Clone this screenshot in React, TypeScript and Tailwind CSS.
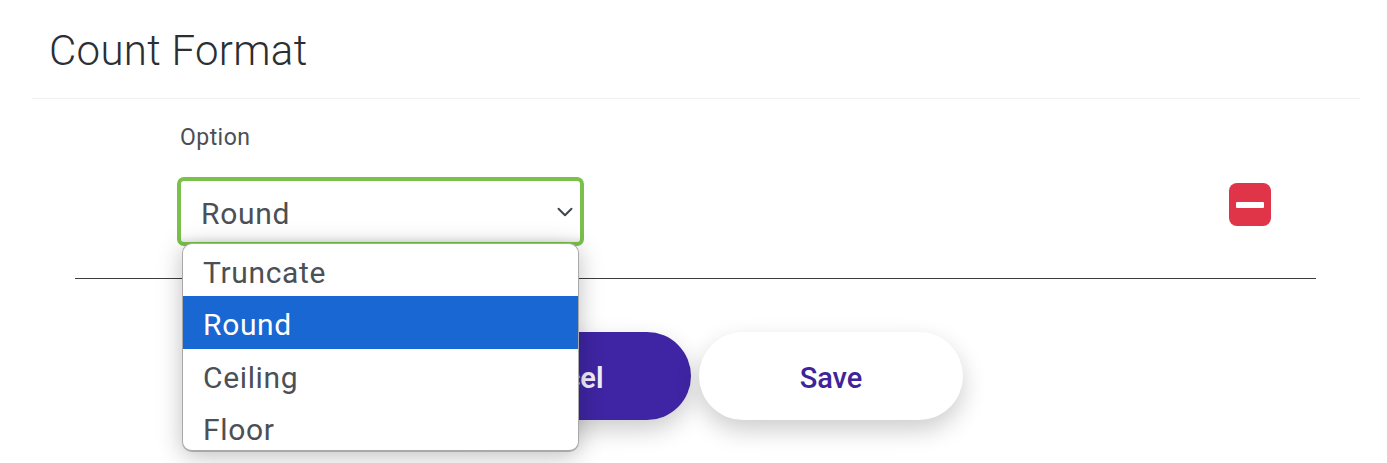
import React from 'react';
import { ChevronDown } from 'lucide-react';

const options = ['Truncate', 'Round', 'Ceiling', 'Floor'];

export default function App() {
  return (
    <div className="h-[463px] w-[1387px] overflow-hidden bg-white font-['Roboto',sans-serif] text-[#3a3f44]">
      <div className="ml-8 mr-[27px] h-[99px] border-b border-[#f1f1f1] pl-[17px] pt-[26px]">
        <h1 className="text-[42px] font-light leading-[50px] tracking-[0.3px] text-[#2b2f33]">Count Format</h1>
      </div>

      <div className="ml-[75px] mr-[71px] h-[180px] border-b border-[#3d3d3d]">
        <div className="flex">
          <div className="ml-[102px] w-[407px]">
            <div className="pl-[3px] pt-[26px] text-[23px] leading-[26px] tracking-[0.45px] text-[#4a4f54]">Option</div>

            <div className="relative mt-[26px] h-[69px]">
              <div className="flex h-[69px] items-center justify-between rounded-[7px] border-4 border-[#7ac04a] pl-5 pr-[2px] shadow-[inset_0_-8px_8px_-8px_rgba(0,0,0,0.15)]">
                <span className="pt-[4px] text-[30px] tracking-[0.7px] text-[#4b5056]">Round</span>
                <ChevronDown size={26} strokeWidth={1.8} className="text-[#3f444a]" />
              </div>

              <div className="absolute left-[5px] top-[66px] z-10 h-[209px] w-[397px] overflow-hidden rounded-[10px] border border-b-2 border-[#a9a9a9] bg-white shadow-[0_4px_24px_rgba(0,0,0,0.25)]">
                {options.map((o) => (
                  <div
                    key={o}
                    className={
                      o === 'Round'
                        ? 'flex h-[53px] items-center bg-[#1967d2] pl-5 pt-[4px] text-[30px] tracking-[0.65px] text-white'
                        : 'flex h-[52px] items-center pl-5 pt-[4px] text-[30px] tracking-[0.65px] text-[#4b5056]'
                    }
                  >
                    {o}
                  </div>
                ))}
              </div>
            </div>
          </div>

          <div className="ml-[645px] mt-[84px]">
            <button className="flex h-[43px] w-[42px] items-center justify-center rounded-[8px] bg-[#e03448]">
              <span className="h-[6px] w-7 rounded-[1px] bg-white" />
            </button>
          </div>
        </div>
      </div>

      <div className="ml-[427px] mt-[53px] flex gap-2">
        <button className="h-[88px] w-[264px] rounded-full bg-[#3f25a3] pt-[6px] text-[29px] font-semibold text-[#f1eefa] shadow-[0_10px_24px_rgba(0,0,0,0.2)]">
          Cancel
        </button>
        <button className="h-[88px] w-[264px] rounded-full bg-white pt-[6px] text-[29px] font-medium text-[#3f2399] shadow-[0_10px_24px_rgba(0,0,0,0.2)]">
          Save
        </button>
      </div>
    </div>
  );
}
